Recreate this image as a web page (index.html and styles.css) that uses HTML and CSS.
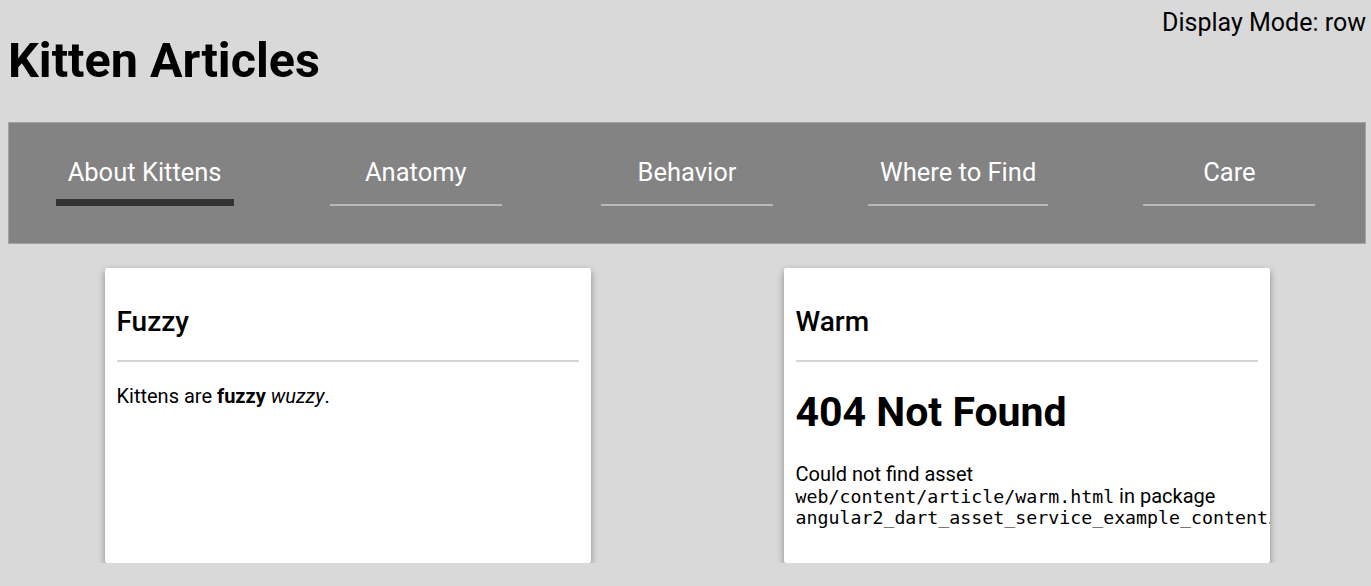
FILE: index.html
```html
<!DOCTYPE html>
<html>
<head>
<meta charset="utf-8">
<title>Kitten Articles</title>
<link rel="stylesheet" href="styles.css">
</head>
<body>
<header class="header">
  <div class="mode">Display Mode: row</div>
  <h1 class="title">Kitten Articles</h1>
</header>
<nav class="tabs">
  <div class="tab-cell"><span class="tab active">About Kittens</span></div>
  <div class="tab-cell"><span class="tab">Anatomy</span></div>
  <div class="tab-cell"><span class="tab">Behavior</span></div>
  <div class="tab-cell"><span class="tab">Where to Find</span></div>
  <div class="tab-cell"><span class="tab">Care</span></div>
</nav>
<main class="cards">
  <div class="card-cell">
    <article class="card">
      <h2 class="card-title">Fuzzy</h2>
      <hr class="divider">
      <div class="card-body">
        <p class="text">Kittens are <b>fuzzy</b> <i>wuzzy</i>.</p>
      </div>
    </article>
  </div>
  <div class="card-cell">
    <article class="card">
      <h2 class="card-title">Warm</h2>
      <hr class="divider">
      <div class="card-body">
        <h1 class="error-title">404 Not Found</h1>
        <p class="text">Could not find asset <code class="code">web/content/article/warm.html</code> in package <code class="code">angular2_dart_asset_service_example_content</code>.</p>
      </div>
    </article>
  </div>
</main>
</body>
</html>
```
FILE: styles.css
```css
html, body {
  background: #d9d9d9;
}
body {
  margin: 8px 5px 8px 8px;
  font-family: Roboto, "Liberation Sans", sans-serif;
  color: #000;
}
.header {
  display: flex;
  flex-direction: column;
}
.mode {
  align-self: flex-end;
  font-size: 25px;
  line-height: 29px;
}
.title {
  margin: -4px 0 33px;
  font-size: 48.5px;
  font-weight: 700;
  line-height: 56px;
}
.tabs {
  display: grid;
  grid-template-columns: repeat(5, 1fr);
  background: #838383;
  border: 1px solid #a2a2a2;
  padding: 35px 0 37px;
}
.tab-cell {
  display: flex;
  justify-content: center;
}
.tab {
  box-sizing: border-box;
  height: 48px;
  min-width: 172px;
  padding: 0 12px;
  text-align: center;
  color: #fff;
  font-size: 25.5px;
  line-height: 28px;
  border-bottom: 2px solid #b8b8b8;
}
.tab.active {
  border-bottom: 7px solid #333333;
}
.cards {
  display: grid;
  grid-template-columns: 1fr 1fr;
  margin-top: 24px;
}
.card-cell {
  display: flex;
  justify-content: center;
}
.card {
  box-sizing: border-box;
  width: 486px;
  height: 295px;
  background: #fff;
  border-radius: 2px;
  padding: 37px 12px 12px;
  overflow: hidden;
  box-shadow: 0 3px 7px rgba(0, 0, 0, 0.38);
}
.card-title {
  margin: 0;
  font-size: 28px;
  font-weight: 500;
  line-height: 33px;
}
.divider {
  margin: 22px 0 0;
  border: 0;
  border-top: 2px solid #d5d5d5;
  height: 0;
}
.card-body {
  padding-top: 24px;
}
.text {
  margin: 0;
  font-size: 20px;
  line-height: 21.7px;
}
.error-title {
  margin: 3px 0 28px;
  font-size: 41px;
  font-weight: 700;
  line-height: 47px;
}
.code {
  font-family: "DejaVu Sans Mono", "Liberation Mono", monospace;
  font-size: 18.25px;
}
```
